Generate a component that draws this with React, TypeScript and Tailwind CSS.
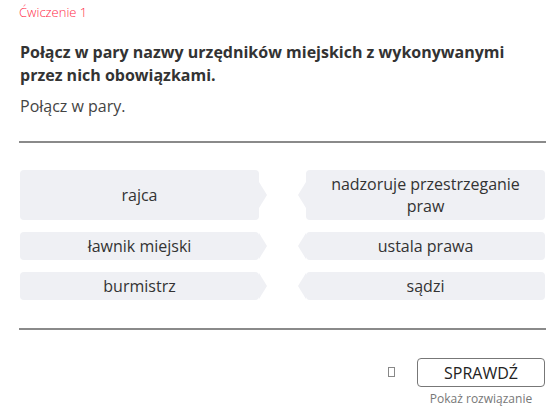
const pairs: [string, string][] = [
  ['rajca', 'nadzoruje przestrzeganie praw'],
  ['ławnik miejski', 'ustala prawa'],
  ['burmistrz', 'sądzi'],
]

function Card({ text, side }: { text: string; side: 'left' | 'right' }) {
  return (
    <div className="relative flex items-center justify-center rounded-[4px] bg-[#eff0f4] px-6 py-[3px] text-center text-[16px] leading-[22px] text-[#333]">
      {text}
      {side === 'left' ? (
        <span className="absolute left-full top-1/2 h-[26px] w-[8px] -translate-y-1/2 bg-[#eff0f4] [clip-path:polygon(0_0,100%_50%,0_100%)]" />
      ) : (
        <span className="absolute right-full top-1/2 h-[26px] w-[8px] -translate-y-1/2 bg-[#eff0f4] [clip-path:polygon(100%_0,0_50%,100%_100%)]" />
      )}
    </div>
  )
}

export default function App() {
  return (
    <div className="h-[412px] w-[557px] bg-white pl-[19px] pr-[11px] pt-[3px] font-['Open_Sans',sans-serif] text-[#333]">
      <div className="text-[13px] font-light leading-[18px] text-[#ff2a48]">Ćwiczenie 1</div>

      <h1 className="mt-[20px] pl-[1px] text-[16px] font-bold leading-[23px] text-[#333]">
        Połącz w pary nazwy urzędników miejskich z wykonywanymi przez nich obowiązkami.
      </h1>
      <p className="mt-[8px] pl-[1px] text-[16px] leading-[22px] text-[#444]">Połącz w pary.</p>

      <div className="mt-[24px] h-[2px] bg-[#8a8a8a]" />

      <div className="mt-[27px] grid grid-cols-2 gap-x-[47px] gap-y-[12px] pl-[1px] pr-[1px]">
        {pairs.map(([a, b]) => (
          <div key={a} className="contents">
            <Card text={a} side="left" />
            <Card text={b} side="right" />
          </div>
        ))}
      </div>

      <div className="mt-[28px] h-[2px] bg-[#8a8a8a]" />

      <div className="mt-[28px] flex items-start justify-end pr-[1px]">
        <span className="mr-[22px] mt-[9px] h-[10px] w-[7px] border border-[#888]" />
        <div className="flex flex-col items-center">
          <button className="h-[29px] w-[128px] rounded-[4px] border border-[#777] bg-white text-[16px] leading-[20px] text-[#222]">
            SPRAWDŹ
          </button>
          <span className="mt-[4px] text-[12px] leading-[16px] text-[#777]">Pokaż rozwiązanie</span>
        </div>
      </div>
    </div>
  )
}
